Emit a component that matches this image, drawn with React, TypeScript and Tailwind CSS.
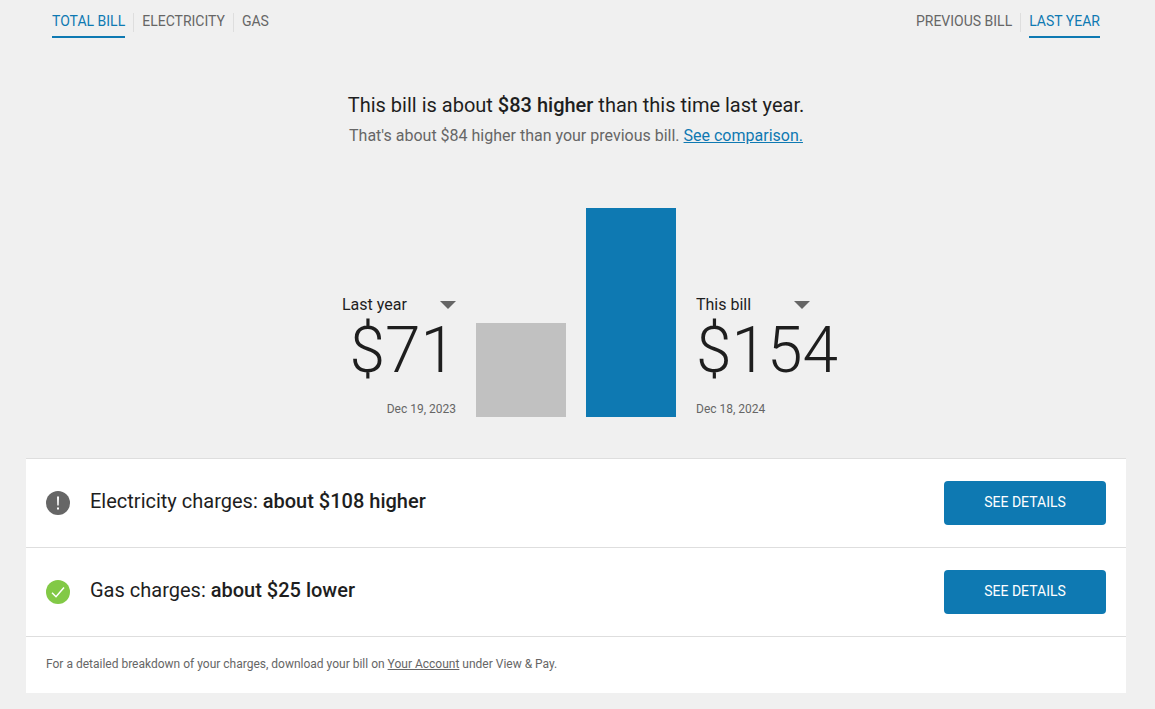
import React from "react";

function Divider() {
  return <span className="mt-[3px] h-[19px] w-px bg-[#dedede]" aria-hidden="true" />;
}

function Tab({ label, active = false }: { label: string; active?: boolean }) {
  return (
    <button
      type="button"
      aria-pressed={active}
      className={
        active
          ? "h-7 border-b-2 border-[#0e79b2] pb-1 text-sm leading-[22px] text-[#0e79b2]"
          : "h-7 border-b-2 border-transparent pb-1 text-sm leading-[22px] text-[#666666]"
      }
    >
      {label}
    </button>
  );
}

function BillPicker({ id, label, value, options }: { id: string; label: string; value: string; options: string[] }) {
  return (
    <div className="grid w-[114px] items-center">
      <select
        id={id}
        aria-label={label}
        defaultValue={value}
        className="col-start-1 row-start-1 h-6 w-full appearance-none bg-transparent pb-0.5 text-base leading-6 text-[#1e1e1e]"
      >
        {options.map((option) => (
          <option key={option}>{option}</option>
        ))}
      </select>
      <svg
        className="pointer-events-none col-start-1 row-start-1 h-2 w-4 justify-self-end"
        viewBox="0 0 16 8"
        aria-hidden="true"
      >
        <path d="M0 0h16L8 8z" fill="#666666" />
      </svg>
    </div>
  );
}

function AlertIcon() {
  return (
    <svg className="size-6 shrink-0" viewBox="0 0 24 24" aria-hidden="true">
      <circle cx="12" cy="12" r="12" fill="#666666" />
      <path d="M11 5.5h2l-.3 9h-1.4z" fill="#fff" />
      <rect x="11" y="16.5" width="2" height="2" fill="#fff" />
    </svg>
  );
}

function CheckIcon() {
  return (
    <svg className="size-6 shrink-0" viewBox="0 0 24 24" aria-hidden="true">
      <circle cx="12" cy="12" r="12" fill="#82c946" />
      <path d="M6 12.7l4 4L18 7.6" fill="none" stroke="#fff" strokeWidth="1.5" />
    </svg>
  );
}

function ChargeRow({ icon, name, change }: { icon: React.ReactNode; name: string; change: string }) {
  return (
    <li className="flex items-center gap-5 border-t border-[#dedede] px-5 py-[22px]">
      {icon}
      <p className="flex-1 pb-1 text-xl leading-7 text-[#1e1e1e]">
        {name} <strong className="font-medium">{change}</strong>
      </p>
      <button type="button" className="h-11 w-[162px] rounded bg-[#0e79b2] pb-0.5 text-sm text-white">
        SEE DETAILS
      </button>
    </li>
  );
}

export default function App() {
  return (
    <main className="min-h-screen bg-[#f0f0f0] pt-2.5 pr-[29px] pb-4 pl-[26px] font-['Roboto',sans-serif] font-normal">
      <nav className="flex flex-wrap justify-between px-[26px]" aria-label="Bill views">
        <div className="flex gap-2">
          <Tab label="TOTAL BILL" active />
          <Divider />
          <Tab label="ELECTRICITY" />
          <Divider />
          <Tab label="GAS" />
        </div>
        <div className="flex gap-2">
          <Tab label="PREVIOUS BILL" />
          <Divider />
          <Tab label="LAST YEAR" active />
        </div>
      </nav>

      <header className="mt-[51px] text-center">
        <h1 className="text-xl leading-8 text-[#1e1e1e]">
          This bill is about <strong className="font-medium">$83 higher</strong> than this time last year.
        </h1>
        <p className="text-base leading-[30px] text-[#666666]">
          That's about $84 higher than your previous bill.{" "}
          <a href="#comparison" className="text-[#0e79b2] underline">
            See comparison.
          </a>
        </p>
      </header>

      <section
        className="mt-[57px] grid grid-cols-[1fr_90px_90px_1fr] items-end gap-5"
        aria-label="Bill comparison"
      >
        <div className="flex flex-col items-end">
          <BillPicker id="base-bill" label="Compare from" value="Last year" options={["Last year", "Previous bill"]} />
          <p className="text-[64px] leading-[68px] font-light text-[#1e1e1e]">$71</p>
          <p className="mt-4 text-xs leading-4 text-[#666666]">Dec 19, 2023</p>
        </div>
        <div className="h-[94px] bg-[#c1c1c1]" />
        <div className="h-[209px] bg-[#0e79b2]" />
        <div className="flex flex-col items-start">
          <BillPicker id="current-bill" label="Compare to" value="This bill" options={["This bill"]} />
          <p className="text-[64px] leading-[68px] font-light text-[#1e1e1e]">$154</p>
          <p className="mt-4 text-xs leading-4 text-[#666666]">Dec 18, 2024</p>
        </div>
      </section>

      <section className="mt-[41px] bg-white" aria-label="Charges">
        <ul>
          <ChargeRow icon={<AlertIcon />} name="Electricity charges:" change="about $108 higher" />
          <ChargeRow icon={<CheckIcon />} name="Gas charges:" change="about $25 lower" />
        </ul>
        <p className="border-t border-[#dedede] px-5 pt-[17px] pb-[19px] text-xs leading-5 text-[#666666]">
          For a detailed breakdown of your charges, download your bill on{" "}
          <a href="#account" className="underline">
            Your Account
          </a>{" "}
          under View &amp; Pay.
        </p>
      </section>
    </main>
  );
}
